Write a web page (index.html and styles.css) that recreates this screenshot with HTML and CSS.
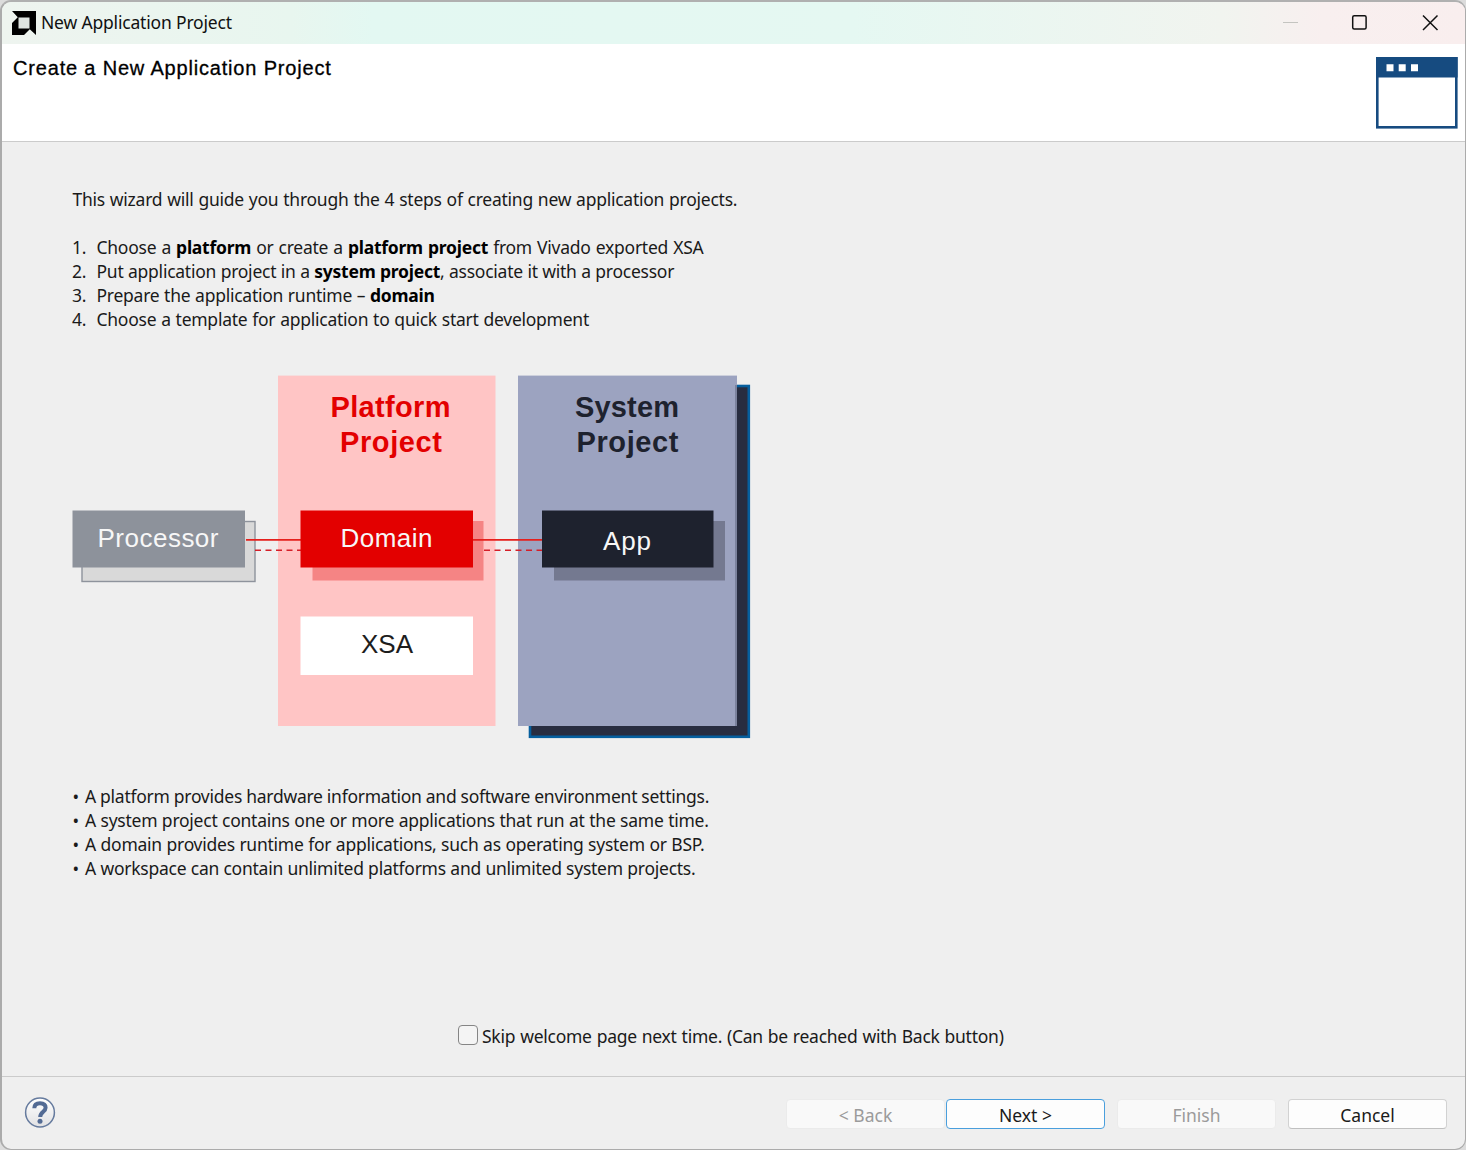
FILE: index.html
```html
<!DOCTYPE html>
<html lang="en">
<head>
<meta charset="utf-8">
<title>New Application Project</title>
<link rel="stylesheet" href="styles.css">
</head>
<body>
<div class="window">
  <header class="titlebar">
    <svg class="logo" width="24" height="24" viewBox="0 0 24 24"><path d="M0 0H24V24L17.500 18H6V6.500Z"/><path d="M0 12L6 6V18H18L12 24H0Z"/><path class="logo-hole" d="M6.500 6.500H17.500V17.500H6.500Z"/></svg>
    <span class="title">New Application Project</span>
    <svg class="controls" width="160" height="20" viewBox="0 0 160 20">
      <path class="minimize" d="M1 10.500H16"/>
      <rect x="70.700" y="3.700" width="13.400" height="13.400" rx="1.500"/>
      <path d="M141 3.500L155.500 18M155.500 3.500L141 18"/>
    </svg>
  </header>
  <section class="banner">
    <h1>Create a New Application Project</h1>
    <svg class="banner-icon" width="82" height="72" viewBox="0 0 82 72">
      <rect x="1.300" y="1.300" width="79" height="69" class="frame"/>
      <path class="bar" d="M0 0H81.600V20.500H0Z"/>
      <path class="dots" d="M10.500 7.200h7v7h-7zM22.700 7.200h7v7h-7zM35 7.200h7v7h-7z"/>
    </svg>
  </section>
  <main class="content">
    <p class="intro">This wizard will guide you through the 4 steps of creating new application projects.</p>
    <ol class="steps">
      <li><span class="num">1.</span><span class="s1">Choose a <b>platform</b> or create a <b>platform project</b> from Vivado exported XSA</span></li>
      <li><span class="num">2.</span><span class="s2">Put application project in a <b>system project</b>, associate it with a processor</span></li>
      <li><span class="num">3.</span><span class="s3">Prepare the application runtime – <b>domain</b></span></li>
      <li><span class="num">4.</span><span class="s4">Choose a template for application to quick start development</span></li>
    </ol>
    <svg class="diagram" width="680" height="366" viewBox="72 375 680 366">
      <rect x="278" y="375.600" width="217.500" height="350.400" fill="#ffc5c5"/>
      <rect x="530" y="386" width="218.800" height="350.800" fill="#282d40" stroke="#065f9e" stroke-width="2.600"/>
      <rect x="518" y="375.600" width="219" height="350.400" fill="#9ca3c0"/>
      <path d="M736 385V726" stroke="#7b829d" stroke-width="2"/>
      <rect x="82" y="521.500" width="173" height="60" fill="#d9d9d9" stroke="#8e939c" stroke-width="1.400"/>
      <rect x="72.500" y="510.500" width="172.500" height="57" fill="#8d929b"/>
      <rect x="312.500" y="521" width="171" height="59.500" fill="#f58484"/>
      <rect x="554" y="521" width="171" height="59.500" fill="#747990"/>
      <path d="M246 539.800H301M473 539.800H542" stroke="#e5201d" stroke-width="1.800"/>
      <path d="M255 550.200H301M484 550.200H542" stroke="#d51e28" stroke-width="1.600" stroke-dasharray="6 4.500"/>
      <rect x="300.500" y="510.500" width="172.500" height="57" fill="#e30000"/>
      <rect x="542" y="510.500" width="171.500" height="57" fill="#1e222e"/>
      <rect x="300.500" y="616.500" width="172.500" height="58.500" fill="#fff"/>
      <g class="heading" fill="#e30000">
        <text x="330.500" y="417" textLength="120">Platform</text>
        <text x="340" y="451.500" textLength="102">Project</text>
      </g>
      <g class="heading" fill="#1e222e">
        <text x="575" y="417" textLength="104">System</text>
        <text x="576.500" y="451.500" textLength="102">Project</text>
      </g>
      <g class="label" fill="#f7f7f7">
        <text x="97.500" y="547" textLength="121">Processor</text>
        <text x="340.500" y="547" textLength="92">Domain</text>
        <text x="603" y="550" textLength="48">App</text>
        <text x="361" y="652.500" textLength="52" fill="#1d1d1d">XSA</text>
      </g>
    </svg>
    <ul class="notes">
      <li class="n1"><span class="dot">•</span>A platform provides hardware information and software environment settings.</li>
      <li class="n2"><span class="dot">•</span>A system project contains one or more applications that run at the same time.</li>
      <li class="n3"><span class="dot">•</span>A domain provides runtime for applications, such as operating system or BSP.</li>
      <li class="n4"><span class="dot">•</span>A workspace can contain unlimited platforms and unlimited system projects.</li>
    </ul>
    <label class="skip"><span class="checkbox"></span><span>Skip welcome page next time. (Can be reached with Back button)</span></label>
  </main>
  <footer class="footer">
    <svg class="help" width="32" height="32" viewBox="0 0 32 32">
      <defs><linearGradient id="g" x2="0" y2="1"><stop stop-color="#fff"/><stop offset="1" stop-color="#e1e1e3"/></linearGradient></defs>
      <circle cx="16" cy="15.500" r="14.400" fill="url(#g)" stroke="#667b9e" stroke-width="1.500"/>
      <path d="M10.300 11.300C10.300 7.700 12.400 6.200 16 6.200C19.600 6.200 21.600 8 21.600 10.700C21.600 14.800 16.200 14.700 16.200 20.100" fill="none" stroke="#536b94" stroke-width="4"/>
      <circle cx="16" cy="24.200" r="2.500" fill="#536b94"/>
    </svg>
    <div class="buttons">
      <button class="btn" disabled>&lt; Back</button>
      <button class="btn primary">Next &gt;</button>
      <button class="btn finish" disabled>Finish</button>
      <button class="btn cancel">Cancel</button>
    </div>
  </footer>
</div>
</body>
</html>
```
FILE: styles.css
```css
* { box-sizing: border-box; }
body {
  margin: 0;
  height: 1150px;
  overflow: hidden;
  background: #dcdcdc;
  font: 17.5px/24px "Noto Sans", "Open Sans", sans-serif;
  letter-spacing: -0.25px;
  color: #1a1a1a;
}
.window {
  height: 1150px;
  display: flex;
  flex-direction: column;
  border: 2px solid #ababab;
  border-top-color: #b0b0b0;
  border-right-width: 1px;
  border-bottom-width: 1px;
  border-radius: 11px;
  overflow: hidden;
  background: #efefef;
}
.titlebar {
  height: 42px;
  flex: none;
  display: flex;
  align-items: center;
  padding: 0 23px 2px 10px;
  background: linear-gradient(90deg, #eef4ef 0, #e8f6ef 290px, #e3f8f2 370px, #e5f8f2 850px, #f1f4ef 1220px, #f8efef 1320px, #f9eeee 100%);
}
.logo { margin-top: 1px; }
.title { margin: 0 0 0 5px; letter-spacing: -0.18px; color: #111; }
.logo-hole { fill: #dfe5e1; }
.controls { margin-left: auto; fill: none; stroke: #111; stroke-width: 1.5; }
.controls .minimize { stroke: #c4c4c0; stroke-width: 1; }
.banner {
  height: 98px;
  flex: none;
  display: flex;
  justify-content: space-between;
  align-items: flex-start;
  padding: 13px 7px 0 11px;
  background: #fff;
  border-bottom: 1px solid #cbcbcb;
}
h1 { margin: -1px 0 0; font: 20px/24px "Liberation Sans", Arial, sans-serif; color: #000; -webkit-text-stroke: 0.3px #000; letter-spacing: 0.82px; }
.frame { fill: #fff; stroke: #164b80; stroke-width: 2.6; }
.bar { fill: #164b80; }
.dots { fill: #fff; }
.content {
  flex: 1;
  display: flex;
  flex-direction: column;
  padding: 45px 70px 0;
}
p, ol, ul { margin: 0; padding: 0; list-style: none; white-space: nowrap; }
.intro { padding-left: 0.5px; word-spacing: 0.6px; }
.steps { margin-top: 24px; }
.steps li { display: flex; }
.num { width: 24.5px; }
.s1 { word-spacing: 0.8px; }
.s2 { word-spacing: 0.25px; }
.s3 { word-spacing: 0.4px; }
.s4 { word-spacing: 0.55px; }
b { color: #000; }
.diagram { margin-top: 44px; flex: none; letter-spacing: 0; }
.heading { font: bold 29px "Liberation Sans", Arial, sans-serif; }
.label { font: 26px "Liberation Sans", Arial, sans-serif; }
.notes { margin-top: 43px; padding-left: 0.5px; }
.dot { display: inline-block; width: 12.5px; }
.n1 { word-spacing: -0.2px; }
.n2 { word-spacing: 0.3px; }
.n3 { word-spacing: 0.3px; }
.n4 { word-spacing: 0.15px; }
.skip { display: flex; align-items: center; margin: 144px 0 0 386px; white-space: nowrap; word-spacing: 0.6px; }
.checkbox { width: 20px; height: 20px; margin: -2px 4px 0 0; border: 1.5px solid #858585; border-radius: 4px; background: #f4f4f4; }
.footer {
  height: 73px;
  flex: none;
  display: flex;
  align-items: center;
  justify-content: space-between;
  padding: 0 18px 0 22px;
  border-top: 1px solid #cbcbcb;
}
.help { margin-top: -1px; }
.buttons { display: flex; margin-top: 2px; }
.btn {
  width: 159px;
  height: 30px;
  padding: 1px 0 0;
  font: 17.5px/24px "Noto Sans", "Open Sans", sans-serif;
  color: #1a1a1a;
  background: #fdfdfd;
  border: 1px solid #d2d2d2;
  border-radius: 4px;
}
.btn:disabled { color: #9b9b9b; background: #f9f9f9; border-color: #ebebeb; }
.primary { margin-left: 1px; border-color: #4a9fdd; }
.finish { margin-left: 12px; }
.cancel { margin-left: 12px; border-bottom-color: #c0c0c0; }
```
